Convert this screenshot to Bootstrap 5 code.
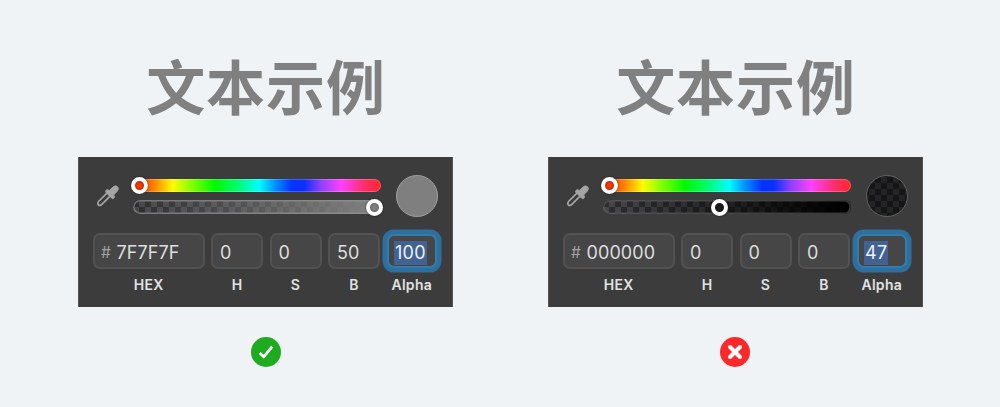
<!DOCTYPE html>
<html lang="zh-CN">
<head>
  <meta charset="UTF-8">
  <title>文本示例</title>
  <link href="https://cdn.jsdelivr.net/npm/bootstrap@5.3.2/dist/css/bootstrap.min.css" rel="stylesheet">
  <style>
    body {
      background-color: #eff3f6;
      font-family: Inter, "Liberation Sans", "Noto Sans CJK SC", sans-serif;
      overflow: hidden;
    }
    .examples {
      padding-left: 78px;
      gap: 95px;
    }
    .example {
      width: 375px;
      padding-top: 40px;
    }
    .sample-text {
      font-family: "Noto Sans CJK SC", sans-serif;
      font-size: 59px;
      font-weight: 700;
      line-height: 89px;
      letter-spacing: .9px;
      padding-left: 1px;
      color: #808080;
      margin-bottom: 28px;
    }
    .picker {
      width: 375px;
      height: 150px;
      padding: 18px 0 0 14px;
      background: #3c3c3c;
      border-left: 1px solid #555;
      border-right: 1px solid #555;
    }
    .picker-top {
      height: 42px;
      padding-left: 1px;
    }
    .dropper {
      width: 26px;
      height: 26px;
      margin-right: 13px;
    }
    .tracks {
      width: 248px;
      gap: 8px;
      margin-right: 15px;
      padding-top: 4px;
    }
    .track {
      height: 13px;
      border-radius: 7px;
    }
    .hue {
      background: linear-gradient(to right, #ff2d00 0, #ff4800 4%, #ff8a00 9%, #fffb00 16%, #7dff00 24%, #00f900 33%, #00fb6e 42%, #00fdff 51%, #0096ff 57%, #0433ff 64%, #0b30ff 69%, #9340ff 76%, #ff40ff 84%, #ff2f70 93%, #ff2626 100%);
      box-shadow: inset 0 0 0 1px rgba(255, 255, 255, .22);
    }
    .alpha {
      height: 14px;
    }
    .alpha-gray {
      background: linear-gradient(to right, rgba(127, 127, 127, 0), #7f7f7f 96%), repeating-conic-gradient(#2c2e32 0 25%, #484848 0 50%) 6px 1px / 12px 12px;
      box-shadow: inset 0 0 0 1.5px rgba(150, 150, 150, .65);
    }
    .alpha-black {
      background: linear-gradient(to right, rgba(0, 0, 0, 0), #000 96%), repeating-conic-gradient(#2c2e32 0 25%, #484848 0 50%) 6px 1px / 12px 12px;
      box-shadow: inset 0 0 0 1.5px rgba(110, 110, 110, .5);
    }
    .knob {
      top: 50%;
      width: 17px;
      height: 17px;
      margin: -8.5px 0 0 -8.5px;
      border: 4px solid #fff;
      border-radius: 50%;
      box-shadow: 0 0 2px rgba(0, 0, 0, .7), inset 0 0 2px rgba(0, 0, 0, .7);
    }
    .knob-red { background: #f23605; left: 6.5px; }
    .knob-gray { background: #808080; left: 241px; }
    .knob-black { background: #1b1b1d; left: 116.5px; }
    .swatch {
      width: 42px;
      height: 42px;
      border: 1px solid #a0a0a0;
    }
    .swatch-gray { background: #7f7f7f; }
    .swatch-black {
      background: repeating-conic-gradient(#141517 0 25%, #242424 0 50%) 2px 1px / 12px 12px;
      border-color: #606060;
    }
    .fields {
      margin-top: 16px;
      gap: 6.5px;
    }
    .field-box {
      width: 52px;
      height: 36px;
      padding: 3px 0 0 7px;
      background: #464646;
      border: 2px solid #525252;
      border-radius: 7px;
      color: #dedede;
      font-size: 18px;
      line-height: 24px;
    }
    .field-hex {
      width: 111.5px;
      padding-left: 6px;
      letter-spacing: .1px;
    }
    .field-hash {
      width: 15.5px;
      font-size: 15.5px;
      color: #a2a2a2;
    }
    .field-focus {
      width: 50px;
      height: 34px;
      margin: 1px 0 1px .5px;
      padding-left: 5px;
      border-color: #357bab;
      box-shadow: 0 0 0 4.5px #2d6f9e;
      color: #f1f1f1;
    }
    .selected-value {
      background: #416293;
      padding: 0 1px;
      letter-spacing: .3px;
    }
    .field-label {
      margin-top: 6px;
      color: #e2e2e2;
      font-size: 14px;
      font-weight: 600;
      letter-spacing: .3px;
      line-height: 20px;
    }
    .label-alpha { margin-top: 7px; }
    .status {
      margin-top: 30px;
      height: 30px;
    }
    .status-bad { padding-right: 1px; }
    .status svg { display: block; }
  </style>
</head>
<body>

<!-- shared eyedropper icon -->
<svg width="0" height="0" class="d-none">
  <symbol id="dropper" viewBox="0 0 26 26">
    <path d="M13.2 9.8 5 18c-1.2 1.2-1.6 2.9-.7 3.8s2.6.5 3.8-.7l8.2-8.2" fill="none" stroke="#a5a5a5" stroke-width="1.7" stroke-linejoin="round"/>
    <path d="M12 7.4c.7-.8 1.7-.9 2.5-.3l.7.5 3.6-3.4c1.5-1.5 3.5-1.6 4.7-.5 1.1 1.2 1 3.2-.5 4.7l-3.4 3.6.5.7c.6.8.5 1.8-.3 2.5-.7.6-1.5.6-2.1 0l-5.7-5.7c-.6-.6-.6-1.4 0-2.1z" fill="#a5a5a5" stroke="#a5a5a5" stroke-width="1"/>
  </symbol>
</svg>

<div class="examples d-flex">

  <div class="example">
    <h1 class="sample-text text-center">文本示例</h1>
    <div class="picker">
      <div class="picker-top d-flex">
        <svg class="dropper align-self-center"><use href="#dropper"/></svg>
        <div class="tracks d-flex flex-column">
          <div class="track hue position-relative"><span class="knob knob-red position-absolute"></span></div>
          <div class="track alpha alpha-gray position-relative"><span class="knob knob-gray position-absolute"></span></div>
        </div>
        <div class="swatch swatch-gray rounded-circle"></div>
      </div>
      <div class="fields d-flex">
        <div>
          <div class="field-box field-hex d-flex align-items-center"><span class="field-hash">#</span>7F7F7F</div>
          <div class="field-label text-center">HEX</div>
        </div>
        <div>
          <div class="field-box d-flex align-items-center">0</div>
          <div class="field-label text-center">H</div>
        </div>
        <div>
          <div class="field-box d-flex align-items-center">0</div>
          <div class="field-label text-center">S</div>
        </div>
        <div>
          <div class="field-box d-flex align-items-center">50</div>
          <div class="field-label text-center">B</div>
        </div>
        <div>
          <div class="field-box field-focus d-flex align-items-center"><span class="selected-value">100</span></div>
          <div class="field-label label-alpha text-center">Alpha</div>
        </div>
      </div>
    </div>
    <div class="status d-flex justify-content-center">
      <svg width="30" height="30" viewBox="0 0 30 30">
        <circle cx="15" cy="15" r="15" fill="#1fab1f"/>
        <path d="M8.8 16 12.7 19.8 21.2 9.6" fill="none" stroke="#fff" stroke-width="2.8"/>
      </svg>
    </div>
  </div>

  <div class="example">
    <h1 class="sample-text text-center">文本示例</h1>
    <div class="picker">
      <div class="picker-top d-flex">
        <svg class="dropper align-self-center"><use href="#dropper"/></svg>
        <div class="tracks d-flex flex-column">
          <div class="track hue position-relative"><span class="knob knob-red position-absolute"></span></div>
          <div class="track alpha alpha-black position-relative"><span class="knob knob-black position-absolute"></span></div>
        </div>
        <div class="swatch swatch-black rounded-circle"></div>
      </div>
      <div class="fields d-flex">
        <div>
          <div class="field-box field-hex d-flex align-items-center"><span class="field-hash">#</span>000000</div>
          <div class="field-label text-center">HEX</div>
        </div>
        <div>
          <div class="field-box d-flex align-items-center">0</div>
          <div class="field-label text-center">H</div>
        </div>
        <div>
          <div class="field-box d-flex align-items-center">0</div>
          <div class="field-label text-center">S</div>
        </div>
        <div>
          <div class="field-box d-flex align-items-center">0</div>
          <div class="field-label text-center">B</div>
        </div>
        <div>
          <div class="field-box field-focus d-flex align-items-center"><span class="selected-value">47</span></div>
          <div class="field-label label-alpha text-center">Alpha</div>
        </div>
      </div>
    </div>
    <div class="status status-bad d-flex justify-content-center">
      <svg width="30" height="30" viewBox="0 0 30 30">
        <circle cx="15" cy="15" r="15" fill="#ff2828"/>
        <path d="M10 10 20 20M20 10 10 20" fill="none" stroke="#fff" stroke-width="4" stroke-linecap="round"/>
      </svg>
    </div>
  </div>

</div>

<script src="https://cdn.jsdelivr.net/npm/bootstrap@5.3.2/dist/js/bootstrap.bundle.min.js"></script>
</body>
</html>
